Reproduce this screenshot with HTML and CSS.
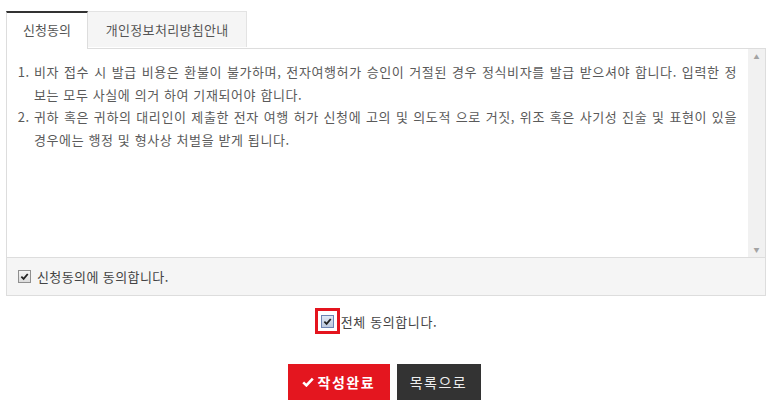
FILE: index.html
```html
<!DOCTYPE html>
<html lang="ko">
<head>
    <meta charset="UTF-8">
    <meta name="viewport" content="width=device-width, initial-scale=1.0">
    <title>신청동의</title>
    <link rel="stylesheet" href="styles.css">
</head>
<body>

    <div class="agree-wrap">
        <ul class="tabs">
            <li class="tab active">신청동의</li>
            <li class="tab">개인정보처리방침안내</li>
        </ul>

        <div class="tab-panel">
            <div class="terms-box">
                <div class="terms-text">
                    <ol>
                        <li>비자 접수 시 발급 비용은 환불이 불가하며, 전자여행허가 승인이 거절된 경우 정식비자를 발급 받으셔야 합니다. 입력한 정보는 모두 사실에 의거 하여 기재되어야 합니다.</li>
                        <li>귀하 혹은 귀하의 대리인이 제출한 전자 여행 허가 신청에 고의 및 의도적 으로 거짓, 위조 혹은 사기성 진술 및 표현이 있을 경우에는 행정 및 형사상 처벌을 받게 됩니다.</li>
                    </ol>
                </div>
                <div class="scrollbar">
                    <span class="arrow">&#9650;</span>
                    <span class="arrow">&#9660;</span>
                </div>
            </div>
            <label class="agree-row">
                <span class="check"><svg viewBox="0 0 10 10" width="9" height="9"><path d="M1.5 5.2 L4 7.6 L8.6 2.2" fill="none" stroke="#222" stroke-width="2"/></svg></span>
                신청동의에 동의합니다.
            </label>
        </div>

        <div class="all-agree">
            <label>
                <span class="focus-ring"><span class="check checked-focus"><svg viewBox="0 0 10 10" width="9" height="9"><path d="M1.5 5.2 L4 7.6 L8.6 2.2" fill="none" stroke="#222" stroke-width="2"/></svg></span></span>전체 동의합니다.
            </label>
        </div>

        <div class="btn-area">
            <button class="btn btn-red"><svg viewBox="0 0 12 10" width="12" height="10"><path d="M1.2 5.4 L4.4 8.4 L10.8 1.6" fill="none" stroke="#fff" stroke-width="2.6"/></svg>작성완료</button>
            <button class="btn btn-dark">목록으로</button>
        </div>
    </div>

</body>
</html>
```

FILE: styles.css
```css
/* 신청동의 페이지 */
body {
    margin: 0;
    padding: 11px 7px 0 6px;
    background-color: #fff;
    font-family: "Noto Sans CJK KR", "Noto Sans", sans-serif;
    font-size: 13px;
    color: #555;
}

.tabs {
    display: flex;
    margin: 0;
    padding: 0;
    list-style: none;
}

.tab {
    height: 35px;
    line-height: 35px;
    padding: 0 18px;
    background-color: #f5f5f5;
    border: 1px solid #e3e3e3;
    border-left: none;
    border-bottom: none;
    color: #555;
    letter-spacing: 0.3px;
}

.tab.active {
    padding: 0 16px;
    background-color: #fff;
    border: 1px solid #ddd;
    border-top: 2px solid #333;
    border-bottom: none;
    margin-bottom: -1px;
    height: 36px;
    line-height: 34px;
    position: relative;
    letter-spacing: 0;
}

.tab-panel {
    border: 1px solid #ddd;
}

.terms-box {
    display: flex;
    height: 208px;
    border-bottom: 1px solid #ddd;
}

.terms-text {
    flex: 1;
    padding: 12px 11px 0 12px;
}

.terms-text ol {
    margin: 0;
    padding-left: 15px;
    line-height: 22.5px;
    letter-spacing: 0.6px;
    text-align: justify;
    color: #5a5a5a;
}

.scrollbar {
    width: 17px;
    background-color: #f1f1f1;
    display: flex;
    flex-direction: column;
    justify-content: space-between;
    align-items: center;
    padding: 4px 0 3px;
}

.scrollbar .arrow {
    font-size: 6px;
    color: #a3a3a3;
    line-height: 8px;
}

.agree-row {
    display: flex;
    align-items: center;
    gap: 6px;
    height: 37px;
    padding-left: 11px;
    background-color: #f5f5f5;
    color: #444;
    letter-spacing: 0.4px;
}

.check {
    display: inline-flex;
    align-items: center;
    justify-content: center;
    width: 11px;
    height: 11px;
    border: 1px solid #8f8f8f;
    background: linear-gradient(#f4f4f4, #dcdcdc);
}

.all-agree {
    display: flex;
    justify-content: center;
    margin-top: 12px;
    padding-right: 20px;
}

.all-agree label {
    display: flex;
    align-items: center;
    color: #444;
    letter-spacing: 0.6px;
}

.focus-ring {
    display: inline-flex;
    align-items: center;
    justify-content: center;
    width: 19px;
    height: 20px;
    border: 3px solid #e4141e;
    margin-right: 1px;
}

.checked-focus {
    border-color: #6d84b4;
    background: linear-gradient(#dfe8f5, #bcc9de);
}

.btn-area {
    display: flex;
    justify-content: center;
    gap: 7px;
    margin-top: 30px;
    padding-right: 4px;
}

.btn {
    height: 36px;
    border: none;
    font-family: "Noto Sans CJK KR", sans-serif;
    font-size: 14px;
    font-weight: bold;
    letter-spacing: 1.5px;
    color: #fff;
    display: inline-flex;
    align-items: center;
    gap: 4px;
}

.btn-red {
    width: 102px;
    padding-left: 14px;
    background-color: #e4161f;
}

.btn-dark {
    width: 84px;
    justify-content: center;
    background-color: #333;
    font-weight: normal;
    color: #eee;
}
```
